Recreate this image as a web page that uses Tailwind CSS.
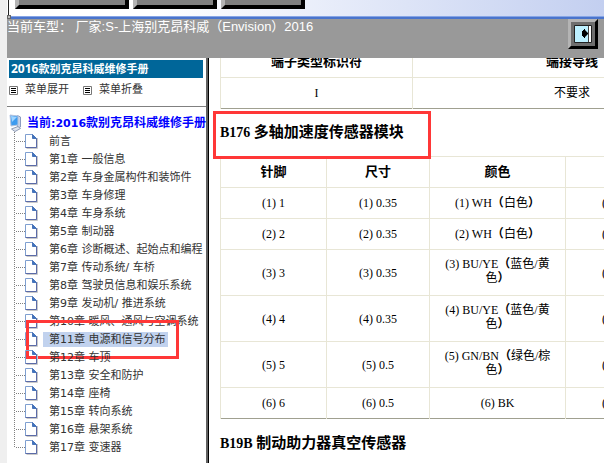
<!DOCTYPE html>
<html lang="zh-CN">
<head>
    <meta charset="UTF-8">
    <meta name="viewport" content="width=device-width, initial-scale=1.0">
    <title>2016款别克昂科威维修手册</title>
    <script src="https://cdn.jsdelivr.net/npm/@tailwindcss/browser@4"></script>
</head>
<body class="h-screen overflow-hidden bg-[#efefef] pl-[7px] text-black">

    <svg class="hidden">
        <defs>
            <linearGradient id="paper" x1="0" y1="0" x2="1" y2="1">
                <stop offset="0.2" stop-color="#ffffff"/>
                <stop offset="1" stop-color="#b9dcfa"/>
            </linearGradient>
            <symbol id="icon-page" viewBox="0 0 18 18">
                <path d="M1.5 16.5H12.5V6" fill="none" stroke="#c9c9c9"/>
                <path d="M0.5 2.5H7.5L11.5 6.5V15.5H0.5Z" fill="url(#paper)" stroke="#7f9fd0"/>
                <path d="M11.5 6.5V15.5H0.5" fill="none" stroke="#5b6ba8"/>
                <path d="M7.5 2.5V6.5H11.5Z" fill="#3f74c0" stroke="#4a74b8"/>
            </symbol>
            <symbol id="icon-list" viewBox="0 0 9 9">
                <path d="M0.5 0.5H8.5V8.5H0.5Z" fill="#fff" stroke="#777"/>
                <path d="M2 2.5H7M2 4.5H7M2 6.5H7" stroke="#000"/>
            </symbol>
        </defs>
    </svg>

    <div class="flex h-full flex-col bg-white">
        <!-- 工具栏 -->
        <div class="relative flex h-[19px] shrink-0 items-start gap-1 border-b-2 border-[#4a74cc] bg-linear-to-r from-white from-25% to-[#c3cff0] pl-2 shadow-[inset_0_-1px_0_#86a5e6]">
            <div class="absolute top-0 left-0 h-[15px] w-0.5 border-r border-[#222] bg-white"></div>
            <div class="absolute top-[15px] left-0 size-1 border border-[#666] bg-[#bbb]"></div>
            <button class="h-[9px] w-[114px] border-r-4 border-b-4 border-l-4 border-black border-l-[#b4b4b4] bg-[#808080]" aria-label="按钮1"></button>
            <button class="h-[9px] w-[84px] border-r-4 border-b-4 border-l-4 border-black border-l-[#b4b4b4] bg-[#808080]" aria-label="按钮2"></button>
            <button class="h-[9px] w-[84px] border-r-4 border-b-4 border-l-4 border-black border-l-[#b4b4b4] bg-[#808080]" aria-label="按钮3"></button>
        </div>

        <header class="flex h-[39px] shrink-0 items-start justify-between bg-[#999] pr-1.5 font-['Liberation_Sans','Noto_Sans_CJK_SC',sans-serif] text-[13px] leading-4 text-white">
            <p>当前车型： 厂家:S-上海别克昂科威（Envision）2016</p>
            <button class="size-[30px]" aria-label="切换">
                <svg class="block size-[30px]" viewBox="0 0 30 30">
                    <path d="M0 0H30V30H0Z" fill="#6e6e6e"/>
                    <path d="M0 0H30L27 3H3V27L0 30Z" fill="#b4b4b4"/>
                    <path d="M30 0V30H0L3 27H27V3Z" fill="#000"/>
                    <path d="M6.5 6.5H23.5V23.5H6.5Z" fill="#bdf0ff" stroke="#222"/>
                    <path d="M20 7H21V23H20Z" fill="#444"/>
                    <path d="M21 7H23V23H21Z" fill="#fff"/>
                    <path d="M14 12H15V11H16V10H17V11L20 14V15L17 18V19H16V18H15V17H14Z" fill="#000"/>
                </svg>
            </button>
        </header>

        <div class="flex min-h-0 flex-1">
            <!-- 目录 -->
            <aside class="w-[199px] shrink-0 overflow-hidden bg-white font-['DejaVu_Sans','Noto_Sans_CJK_SC',sans-serif] text-[11px] whitespace-nowrap text-[#333]">
                <h1 class="mt-0.5 mr-[3px] ml-0.5 h-[18px] bg-[#069] pl-0.5 leading-[18px] font-bold text-white"><span class="font-['Open_Sans'] text-[12px]">2016</span>款别克昂科威维修手册</h1>
                <div class="flex h-[29px] items-center border-b border-[#808080] pb-1 pl-0.5">
                    <button class="mr-[14px] flex items-center gap-[7px]"><svg class="size-[9px]"><use href="#icon-list"/></svg>菜单展开</button>
                    <button class="flex items-center gap-[7px]"><svg class="size-[9px]"><use href="#icon-list"/></svg>菜单折叠</button>
                </div>
                <nav class="pt-[7px]">
                    <div class="flex h-[18px] items-center gap-0.5">
                        <svg class="size-[18px] shrink-0" viewBox="0 0 18 18">
                            <path d="M10.5 1.5L13.5 3V13L10.5 14Z" fill="#c9d3e6" stroke="#8a9cc0"/>
                            <path d="M3 1L11 2V11L4 12Z" fill="#3d9bef" stroke="#b4c3de"/>
                            <path d="M4 2L10 3L5 8Z" fill="#9fd4ff"/>
                            <path d="M4.5 15L11 12.5L13.5 14.5L8 17.5Z" fill="#dfe4ee" stroke="#8e9bb5"/>
                        </svg>
                        <a href="#" class="text-[12px] leading-[18px] font-bold text-[#00f]">当前<span class="text-[11px]">:2016</span>款别克昂科威维修手册</a>
                    </div>
                    <ul id="tree"></ul>
                </nav>
            </aside>
            <div class="w-[3px] shrink-0 border-r border-black bg-[#606060]"></div>

            <!-- 正文 -->
            <main class="min-w-0 flex-1 overflow-hidden bg-white pl-[11px] font-['Liberation_Serif','Noto_Sans_CJK_SC',serif] text-[12px] leading-[14px]">
                <table class="-mt-3 w-[512px] table-fixed border-collapse border-b border-b-[#a0a090] text-center">
                    <thead>
                        <tr class="h-[31px]">
                            <th class="w-[192px] border border-[#e8e6d6] text-[13px]">端子类型标识符</th>
                            <th class="border border-[#e8e6d6] text-[13px]">端接导线</th>
                        </tr>
                    </thead>
                    <tbody>
                        <tr class="h-[31px]">
                            <td class="border-x border-[#e8e6d6]">I</td>
                            <td class="border-x border-[#e8e6d6]">不要求</td>
                        </tr>
                    </tbody>
                </table>

                <div class="relative flex h-[47px] items-center">
                    <h2 class="text-[14px] leading-5 font-bold">B176 <span class="text-[15px]">多轴加速度传感器模块</span></h2>
                    <div class="absolute top-0.5 -left-[7px] h-12 w-[218px] border-3 border-[#ff3737]"></div>
                </div>

                <table class="w-[512px] table-fixed border-collapse border-b border-b-[#a0a090] text-center">
                    <thead>
                        <tr class="h-[31px] text-[13px]">
                            <th class="w-[106px] border border-[#e8e6d6]">针脚</th>
                            <th class="w-[103px] border border-[#e8e6d6]">尺寸</th>
                            <th class="w-[136px] border border-[#e8e6d6]">颜色</th>
                            <th class="border border-[#e8e6d6] pl-9 text-left" aria-label="电路"></th>
                        </tr>
                    </thead>
                    <tbody id="pins"></tbody>
                </table>

                <h2 class="mt-3.5 text-[14px] leading-5 font-bold">B19B <span class="text-[15px]">制动助力器真空传感器</span></h2>
            </main>
        </div>
    </div>

    <script>
        const chapters = [
            "前言",
            "第1章 一般信息",
            "第2章 车身金属构件和装饰件",
            "第3章 车身修理",
            "第4章 车身系统",
            "第5章 制动器",
            "第6章 诊断概述、起始点和编程",
            "第7章 传动系统/ 车桥",
            "第8章 驾驶员信息和娱乐系统",
            "第9章 发动机/ 推进系统",
            "第10章 暖风、通风与空调系统",
            "第11章 电源和信号分布",
            "第12章 车顶",
            "第13章 安全和防护",
            "第14章 座椅",
            "第15章 转向系统",
            "第16章 悬架系统",
            "第17章 变速器"
        ];
        const selectedIndex = 11;

        const pins = [
            ["(1) 1", "(1) 0.35", "(1) WH（白色）"],
            ["(2) 2", "(2) 0.35", "(2) WH（白色）"],
            ["(3) 3", "(3) 0.35", "(3) BU/YE（蓝色/黄<br>色）"],
            ["(4) 4", "(4) 0.35", "(4) BU/YE（蓝色/黄<br>色）"],
            ["(5) 5", "(5) 0.5", "(5) GN/BN（绿色/棕<br>色）"],
            ["(6) 6", "(6) 0.5", "(6) BK"]
        ];

        document.getElementById('tree').innerHTML = chapters.map((name, i) => {
            const last = i === chapters.length - 1;
            const selected = i === selectedIndex;
            return `<li class="relative flex h-[18px] items-center">
                <svg class="size-[18px] shrink-0" viewBox="0 0 18 18"><path d="M7.5 0V${last ? 10 : 18}M9 9.5H18" stroke="#808080" stroke-dasharray="1 1"/></svg>
                <svg class="size-[18px] shrink-0"><use href="#icon-page"/></svg>
                <a href="#" class="pr-0.5 pl-1.5 leading-[15px] ${selected ? 'bg-[#c1d2ee]' : ''}">${name}</a>
                ${selected ? '<div class="absolute -top-2.5 left-[19px] h-[39px] w-[153px] border-3 border-[#ff3737]"></div>' : ''}
            </li>`;
        }).join('');

        document.getElementById('pins').innerHTML = pins.map((row, i) => {
            const tall = row[2].includes('<br>');
            const cells = row.map(cell => cell.replace(/[（）]/g, '<b>$&</b>'));
            return `<tr class="${tall ? 'h-[46px]' : 'h-[31px]'}">` +
                cells.map((cell, c) => `<td class="border-x border-t border-[#e8e6d6] ${c === 2 && tall ? 'pb-1' : ''}">${cell}</td>`).join('') +
                `<td class="border-x border-t border-[#e8e6d6] pl-9 text-left">(${i + 1})</td></tr>`;
        }).join('');
    </script>
</body>
</html>
